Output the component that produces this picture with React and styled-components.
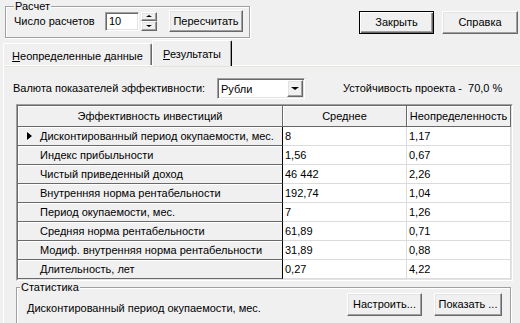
import React from "react";
import styled, { createGlobalStyle, css } from "styled-components";

const GlobalStyle = createGlobalStyle`
  html, body {
    margin: 0;
    padding: 0;
    background: #f0f0f0;
  }
  body {
    font-family: "Liberation Sans", Arial, sans-serif;
    font-size: 11px;
    color: #000;
  }
  * {
    box-sizing: border-box;
  }
`;

const Window = styled.div`
  width: 520px;
  height: 323px;
  overflow: hidden;
  background: #f0f0f0;
`;

const TopBar = styled.div`
  display: flex;
  align-items: flex-start;
  height: 40px;
  padding: 0 2px 0 5px;
`;

const GroupBox = styled.div`
  position: relative;
  display: flex;
  align-items: center;
  width: ${(p) => p.$width}px;
  margin-top: ${(p) => p.$top || 0}px;
  margin-left: ${(p) => p.$left || 0}px;
  padding: ${(p) => p.$pad};
  border: 1px solid #a0a0a0;
  box-shadow: inset 1px 1px 0 #fff, 1px 1px 0 #fff;
`;

const Caption = styled.span`
  position: absolute;
  top: -7px;
  left: ${(p) => p.$left}px;
  padding: 0 1px;
  line-height: 13px;
  background: #f0f0f0;
`;

const Label = styled.span`
  width: ${(p) => (p.$width ? `${p.$width}px` : "auto")};
  flex: ${(p) => (p.$grow ? 1 : "none")};
  margin-top: ${(p) => p.$offset || 0}px;
  margin-left: ${(p) => p.$left || 0}px;
  white-space: pre;
  line-height: 13px;
`;

const Sunken = css`
  border: 1px solid;
  border-color: #a0a0a0 #fff #fff #a0a0a0;
  box-shadow: inset 1px 1px 0 #696969, inset -1px -1px 0 #e3e3e3;
  background: #fff;
`;

const Raised = css`
  background: #f0f0f0;
  border: 1px solid;
  border-color: #fff #696969 #696969 #fff;
  box-shadow: inset -1px -1px 0 #a0a0a0, inset 1px 1px 0 #e3e3e3;
`;

const NumberBox = styled.div`
  ${Sunken};
  width: 35px;
  height: 19px;
  padding: 0 3px;
  line-height: 17px;
`;

const Spin = styled.div`
  display: flex;
  flex-direction: column;
  width: 17px;
  height: 19px;
  margin-left: 2px;
`;

const SpinHalf = styled.div`
  ${Raised};
  flex: 1;
  display: flex;
  align-items: center;
  justify-content: center;
`;

const Arrow = styled.span`
  width: 0;
  height: 0;
  border-left: ${(p) => p.$size}px solid transparent;
  border-right: ${(p) => p.$size}px solid transparent;
  ${(p) =>
    p.$up
      ? css`border-bottom: ${p.$size - 1}px solid #000;`
      : css`border-top: ${p.$size - 1}px solid #000;`}
`;

const Button = styled.button`
  ${Raised};
  flex: none;
  width: ${(p) => p.$w}px;
  height: ${(p) => p.$h || 23}px;
  margin-left: ${(p) => p.$ml || 0}px;
  margin-top: ${(p) => p.$mt || 0}px;
  padding: 0;
  font: inherit;
  color: #000;
  line-height: 13px;
  ${(p) =>
    p.$default &&
    css`
      border: 1px solid #000;
      box-shadow: inset 1px 1px 0 #fff, inset -1px -1px 0 #696969,
        inset -2px -2px 0 #a0a0a0;
    `}
`;

const TabStrip = styled.div`
  display: flex;
  align-items: flex-end;
  height: 25px;
  padding-left: 3px;
`;

const Tab = styled.div`
  position: relative;
  display: flex;
  align-items: center;
  justify-content: center;
  width: ${(p) => p.$width}px;
  height: ${(p) => (p.$active ? 26 : 22)}px;
  padding-top: 2px;
  background: #f0f0f0;
  border-top: 1px solid #fff;
  border-left: 1px solid #fff;
  border-right: 1px solid #696969;
  box-shadow: inset -1px 0 0 #a0a0a0;
  border-radius: 2px 2px 0 0;
  ${(p) =>
    p.$active &&
    css`
      z-index: 1;
      margin-bottom: -1px;
      border-right-color: #000;
      padding-top: 0;
    `}
`;

const Panel = styled.div`
  display: flex;
  flex-direction: column;
  height: 260px;
  margin-left: 3px;
  border-top: 1px solid #fff;
  border-left: 1px solid #fff;
  box-shadow: inset 0 1px 0 #e8e4dc;
`;

const CurrencyRow = styled.div`
  display: flex;
  align-items: center;
  margin-top: 12px;
  padding-left: 9px;
`;

const Combo = styled.div`
  ${Sunken};
  display: flex;
  align-items: center;
  width: 88px;
  height: 21px;
  padding: 1px;
`;

const ComboText = styled.span`
  flex: 1;
  padding-left: 2px;
`;

const DropButton = styled.div`
  ${Raised};
  display: flex;
  align-items: center;
  justify-content: center;
  width: 16px;
  height: 17px;
`;

const GridFrame = styled.div`
  width: 497px;
  margin: 5px 0 0 12px;
  border: 1px solid;
  border-color: #a0a0a0 #fff #fff #a0a0a0;
`;

const Grid = styled.div`
  display: grid;
  grid-template-columns: 265px 124px 1fr;
  grid-template-rows: 21px repeat(8, 19px);
  border: 1px solid;
  border-color: #696969 #e3e3e3 #e3e3e3 #696969;
  background: #fff;
`;

const HeadCell = styled.div`
  background: #f0f0f0;
  border-right: 1px solid #696969;
  border-bottom: 1px solid #696969;
  box-shadow: inset 1px 1px 0 #fff;
  text-align: center;
  line-height: 20px;
  white-space: nowrap;
  overflow: hidden;
`;

const RowHead = styled.div`
  display: flex;
  align-items: center;
  background: #f0f0f0;
  border-right: 1px solid #000;
  border-bottom: 1px solid #696969;
  box-shadow: inset 1px 1px 0 #fff;
  white-space: nowrap;
  overflow: hidden;
`;

const Indicator = styled.span`
  flex: none;
  width: 22px;
  display: flex;
  align-items: center;
`;

const Pointer = styled.span`
  margin-left: 9px;
  width: 0;
  height: 0;
  border-left: 5px solid #000;
  border-top: 4px solid transparent;
  border-bottom: 4px solid transparent;
`;

const Cell = styled.div`
  padding-left: 2px;
  border-right: 1px solid #dcdcdc;
  border-bottom: 1px solid #dcdcdc;
  line-height: 18px;
`;

const StatsRow = styled.div`
  flex: 1;
  display: flex;
  align-items: flex-start;
`;

const rows = [
  ["Дисконтированный период окупаемости, мес.", "8", "1,17"],
  ["Индекс прибыльности", "1,56", "0,67"],
  ["Чистый приведенный доход", "46 442", "2,26"],
  ["Внутренняя норма рентабельности", "192,74", "1,04"],
  ["Период окупаемости, мес.", "7", "1,26"],
  ["Средняя норма рентабельности", "61,89", "0,71"],
  ["Модиф. внутренняя норма рентабельности", "31,89", "0,88"],
  ["Длительность, лет", "0,27", "4,22"],
];

export default function App() {
  return (
    <Window>
      <GlobalStyle />
      <TopBar>
        <GroupBox $width={245} $top={6} $pad="3px 6px 5px 8px">
          <Caption $left={8}>Расчет</Caption>
          <Label $width={91}>Число расчетов</Label>
          <NumberBox>10</NumberBox>
          <Spin>
            <SpinHalf>
              <Arrow $up $size={3} />
            </SpinHalf>
            <SpinHalf>
              <Arrow $size={3} />
            </SpinHalf>
          </Spin>
          <Button $w={74} $h={22} $ml={12}>
            Пересчитать
          </Button>
        </GroupBox>
        <Button $w={75} $mt={11} $ml={109} $default>
          Закрыть
        </Button>
        <Button $w={76} $mt={11} $ml={8}>
          Справка
        </Button>
      </TopBar>

      <TabStrip>
        <Tab $width={149}>
          <span>
            <u>Н</u>еопределенные данные
          </span>
        </Tab>
        <Tab $width={80} $active>
          <span>
            <u>Р</u>езультаты
          </span>
        </Tab>
      </TabStrip>

      <Panel>
        <CurrencyRow>
          <Label $width={204}>Валюта показателей эффективности:</Label>
          <Combo>
            <ComboText>Рубли</ComboText>
            <DropButton>
              <Arrow $size={4} />
            </DropButton>
          </Combo>
          <Label $left={38}>{"Устойчивость проекта -  70,0 %"}</Label>
        </CurrencyRow>

        <GridFrame>
          <Grid>
            <HeadCell>Эффективность инвестиций</HeadCell>
            <HeadCell>Среднее</HeadCell>
            <HeadCell>Неопределенность</HeadCell>
            {rows.map(([name, mean, unc], i) => (
              <React.Fragment key={name}>
                <RowHead>
                  <Indicator>{i === 0 && <Pointer />}</Indicator>
                  {name}
                </RowHead>
                <Cell>{mean}</Cell>
                <Cell>{unc}</Cell>
              </React.Fragment>
            ))}
          </Grid>
        </GridFrame>

        <GroupBox $width={495} $top={6} $left={12} $pad="5px 8px 14px 10px">
          <Caption $left={3}>Статистика</Caption>
          <StatsRow>
            <Label $grow $offset={9}>
              Дисконтированный период окупаемости, мес.
            </Label>
            <Button $w={75}>Настроить...</Button>
            <Button $w={68} $ml={12}>
              Показать ...
            </Button>
          </StatsRow>
        </GroupBox>
      </Panel>
    </Window>
  );
}
